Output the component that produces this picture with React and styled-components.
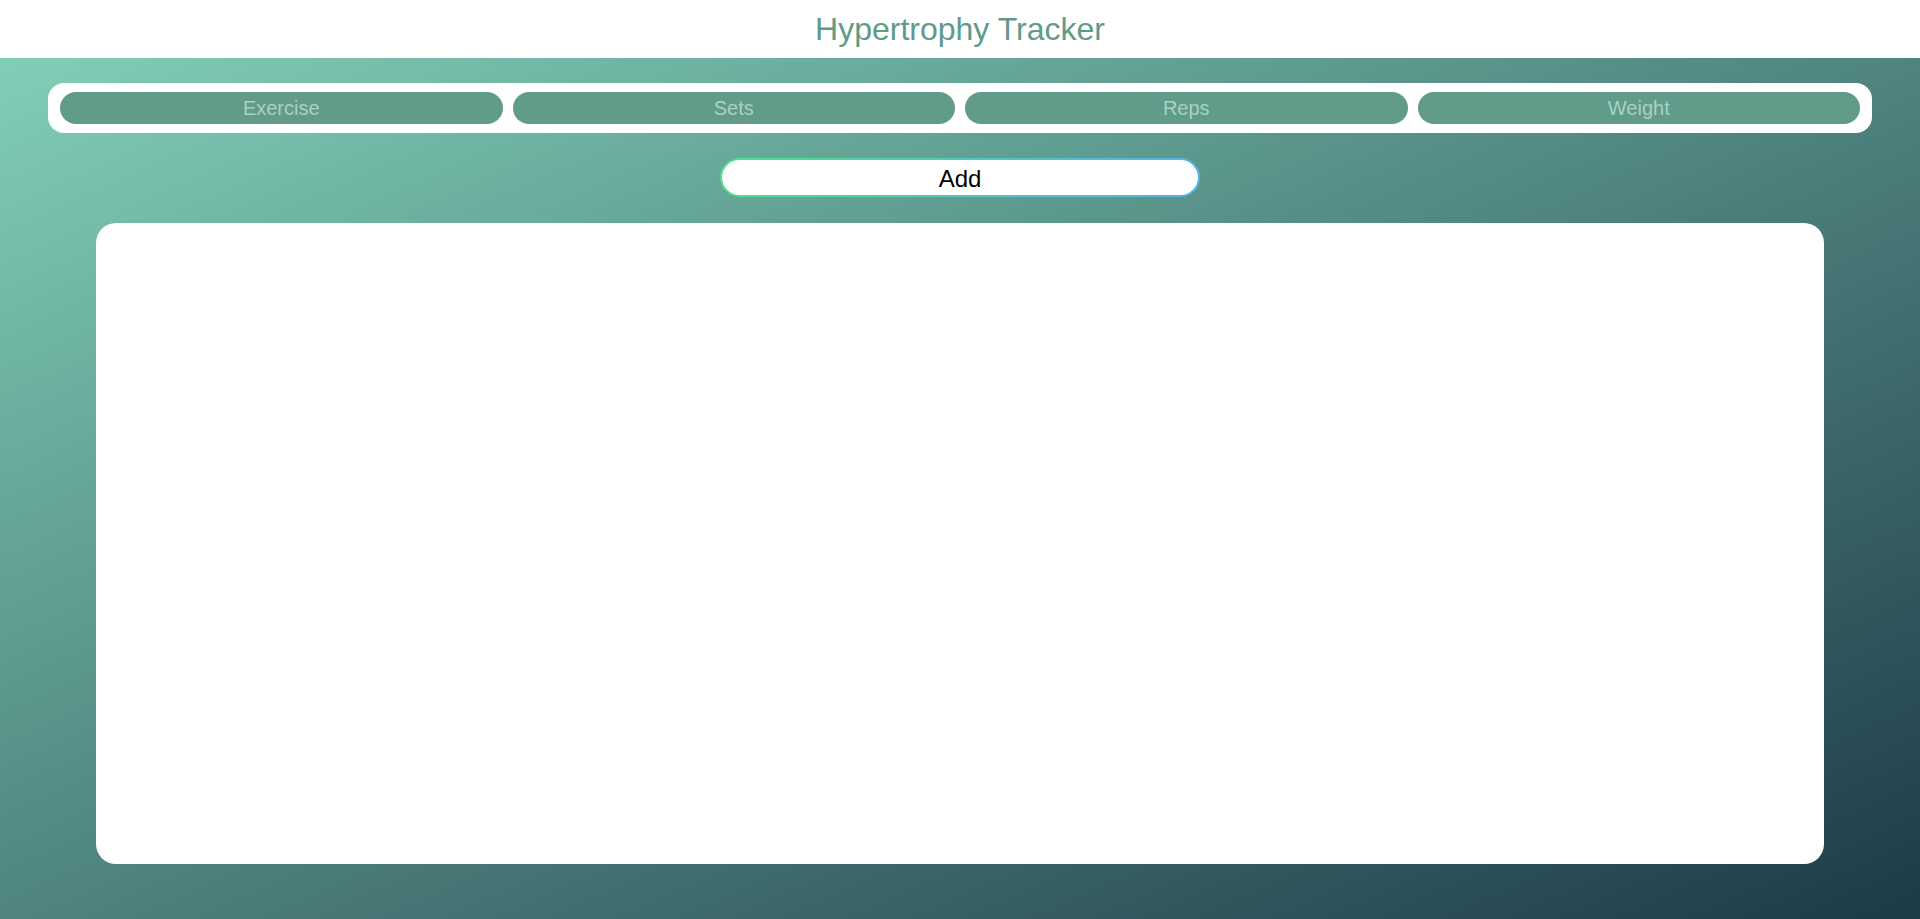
import React, { useState } from "react";
import styled, { createGlobalStyle } from "styled-components";

const GlobalStyle = createGlobalStyle`
  html, body {
    margin: 0;
    padding: 0;
    font-family: "Liberation Sans", Arial, sans-serif;
  }
  * {
    box-sizing: border-box;
  }
`;

const Header = styled.header`
  height: 58px;
  background: #ffffff;
  display: flex;
  align-items: center;
  justify-content: center;
`;

const Title = styled.h1`
  margin: 0;
  font-size: 32px;
  font-weight: normal;
  color: #5e9b88;
`;

const Main = styled.main`
  min-height: 861px;
  padding: 25px 0 55px;
  background: linear-gradient(to bottom right, #81ceb7, #1d3a47);
  display: flex;
  flex-direction: column;
  align-items: center;
`;

const InputBar = styled.form`
  width: 95%;
  height: 50px;
  background: #ffffff;
  border-radius: 16px;
  padding: 9px 12px;
  display: grid;
  grid-template-columns: repeat(4, 1fr);
  gap: 10px;
`;

const Field = styled.input`
  height: 32px;
  min-width: 0;
  border: none;
  outline: none;
  border-radius: 16px;
  background: #619b89;
  color: #ffffff;
  font-family: "Liberation Sans", Arial, sans-serif;
  font-size: 20px;
  text-align: center;

  &::placeholder {
    color: #aad1c4;
  }
`;

const AddButton = styled.button`
  width: 480px;
  height: 39px;
  margin: 25px 0 26px;
  padding: 2px 0 0;
  border: 2px solid transparent;
  border-radius: 20px;
  background:
    linear-gradient(#ffffff, #ffffff) padding-box,
    linear-gradient(to right, #4de08c, #55b3e6) border-box;
  color: #000000;
  font-family: "Liberation Sans", Arial, sans-serif;
  font-size: 24px;
  cursor: pointer;
`;

const Log = styled.section`
  width: 90%;
  height: 641px;
  background: #ffffff;
  border-radius: 20px;
`;

const fields = ["Exercise", "Sets", "Reps", "Weight"];

export default function App() {
  const [entries, setEntries] = useState([]);

  return (
    <>
      <GlobalStyle />
      <Header>
        <Title>Hypertrophy Tracker</Title>
      </Header>
      <Main>
        <InputBar onSubmit={(e) => e.preventDefault()}>
          {fields.map((f) => (
            <Field key={f} placeholder={f} />
          ))}
        </InputBar>
        <AddButton type="button" onClick={() => setEntries([...entries])}>
          Add
        </AddButton>
        <Log />
      </Main>
    </>
  );
}
